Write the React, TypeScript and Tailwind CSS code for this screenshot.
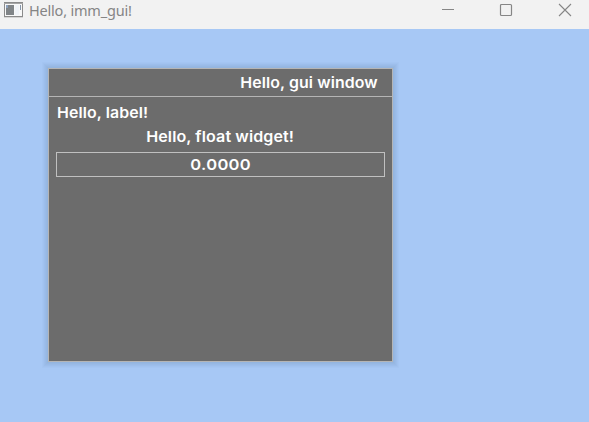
function AppIcon() {
  return (
    <svg className="h-[16px] w-[19px] shrink-0" viewBox="0 0 19 16">
      <rect x="0.5" y="0.5" width="18" height="14" fill="#f8f8f8" stroke="#8b8b8b" />
      <path d="M0 1.5H19" stroke="#a5a5a5" />
      <rect x="2" y="3" width="8" height="10" fill="#808487" />
      <rect x="2" y="3" width="2" height="3" fill="#8ba0bc" />
      <rect x="11" y="3" width="4" height="10" fill="#f0f3f7" />
      <rect x="16" y="3" width="1" height="5" fill="#8796aa" />
      <path d="M0 15.5H19" stroke="#d5d5d5" />
    </svg>
  );
}

function TitleBar() {
  return (
    <header className="flex h-[29px] items-start bg-[#f2f2f2] pl-1 pr-[17px] text-[#858585]">
      <div className="mt-[2px] flex">
        <AppIcon />
      </div>
      <span className="ml-[6px] font-['Noto_Sans','Open_Sans',sans-serif] text-[14.5px] leading-5 tracking-[-0.2px]">
        Hello, imm_gui!
      </span>
      <svg className="ml-auto mt-[3px] h-[14px] w-[132px]" viewBox="0 0 132 14" fill="none" stroke="#868686">
        <path d="M2 6.5H14" />
        <rect x="60.5" y="1.5" width="11" height="11" rx="1" strokeWidth="1.2" />
        <path d="M119 1L131 13M131 1L119 13" strokeWidth="1.1" />
      </svg>
    </header>
  );
}

export default function App() {
  return (
    <div className="h-[422px] w-[589px] overflow-hidden bg-[#a7c8f5]">
      <TitleBar />
      <main className="pl-12 pt-[39px]">
        <section className="h-[294px] w-[345px] border border-[#b5b5b5] bg-[#6c6c6c] font-['Inter',sans-serif] text-[15px] font-semibold leading-6 text-white shadow-[0_0_0_1px_rgba(60,80,130,0.03),0_0_0_2px_rgba(60,80,130,0.03),0_0_0_3px_rgba(60,80,130,0.03),0_0_0_4px_rgba(60,80,130,0.03),0_0_0_5px_rgba(60,80,130,0.025),0_0_0_6px_rgba(60,80,130,0.025)]">
          <div className="flex h-7 items-center justify-end border-b border-[#b5b5b5] pr-[14px]">
            <span className="origin-right scale-x-[1.06] tracking-[0.1px]">Hello, gui window</span>
          </div>
          <div className="flex flex-col items-start px-[7px] pt-1">
            <span className="origin-left scale-x-[1.06] pl-px tracking-[0.1px]">Hello, label!</span>
            <span className="scale-x-[1.07] self-center tracking-[0.1px]">Hello, float widget!</span>
            <div className="mt-[3px] flex h-[25px] w-full items-center justify-center border border-[#c0c0c0]">
              <span className="scale-x-[1.1] pl-px tracking-[0.3px]">0.0000</span>
            </div>
          </div>
        </section>
      </main>
    </div>
  );
}
